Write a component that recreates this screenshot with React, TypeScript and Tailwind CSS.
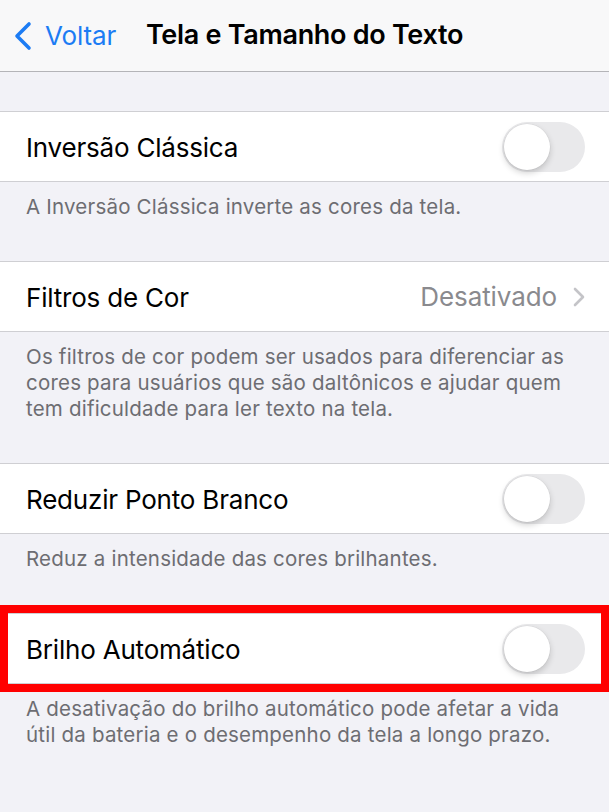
import React from "react";

const Toggle = () => (
  <div className="w-[83px] h-[50px] rounded-full bg-[#e9e9eb] p-[2px] flex items-center">
    <div className="w-[46px] h-[46px] rounded-full bg-white shadow-[0_3px_6px_rgba(0,0,0,0.18),0_0_0_0.5px_rgba(0,0,0,0.06)]" />
  </div>
);

const Row = ({ label, right }: { label: string; right: React.ReactNode }) => (
  <div className="h-[71px] bg-white border-y border-[#cfcfd3] flex items-center justify-between pl-[26px] pr-[24px]">
    <span className="text-[26px] text-black tracking-[-0.2px] pt-[2px]">{label}</span>
    {right}
  </div>
);

const Footer = ({ children }: { children: React.ReactNode }) => (
  <div className="pl-[26px] pr-[30px] pt-[12px] pb-[41px] text-[20.5px] leading-[26px] tracking-[0.2px] text-[#6d6d72]">
    {children}
  </div>
);

export default function App() {
  return (
    <div className="w-[609px] h-[812px] bg-[#f2f2f7] overflow-hidden font-['Inter',sans-serif]">
      {/* Nav bar */}
      <header className="h-[72px] bg-[#f8f8f9] border-b border-[#b4b4b8] relative flex items-center justify-center">
        <div className="absolute left-[12px] top-0 h-full flex items-center gap-[11px] text-[#1c7cf4]">
          <svg width="22" height="30" viewBox="0 0 22 30" fill="none">
            <path d="M17 3 L5 15 L17 27" stroke="currentColor" strokeWidth="3.6" strokeLinecap="round" strokeLinejoin="round" />
          </svg>
          <span className="text-[26px] tracking-[-0.1px]">Voltar</span>
        </div>
        <h1 className="text-[27px] font-semibold text-black tracking-[-0.3px]">Tela e Tamanho do Texto</h1>
      </header>

      <div className="h-[39px]" />

      <Row label="Inversão Clássica" right={<Toggle />} />
      <Footer>A Inversão Clássica inverte as cores da tela.</Footer>

      <Row
        label="Filtros de Cor"
        right={
          <div className="flex items-center gap-[16px]">
            <span className="text-[26px] text-[#8a8a8e] tracking-[-0.1px]">Desativado</span>
            <svg width="12" height="20" viewBox="0 0 12 20" fill="none">
              <path d="M2 2 L10 10 L2 18" stroke="#c4c4c8" strokeWidth="2.6" strokeLinecap="round" strokeLinejoin="round" />
            </svg>
          </div>
        }
      />
      <Footer>
        Os filtros de cor podem ser usados para diferenciar as cores para usuários que são daltônicos e ajudar quem
        tem dificuldade para ler texto na tela.
      </Footer>

      <Row label="Reduzir Ponto Branco" right={<Toggle />} />
      <Footer>Reduz a intensidade das cores brilhantes.</Footer>

      <div className="relative">
        <Row label="Brilho Automático" right={<Toggle />} />
        <div className="absolute left-0 right-0 -top-[8px] -bottom-[8px] border-[8px] border-[#ff0000]" />
      </div>
      <Footer>
        A desativação do brilho automático pode afetar a vida útil da bateria e o desempenho da tela a longo prazo.
      </Footer>
    </div>
  );
}
